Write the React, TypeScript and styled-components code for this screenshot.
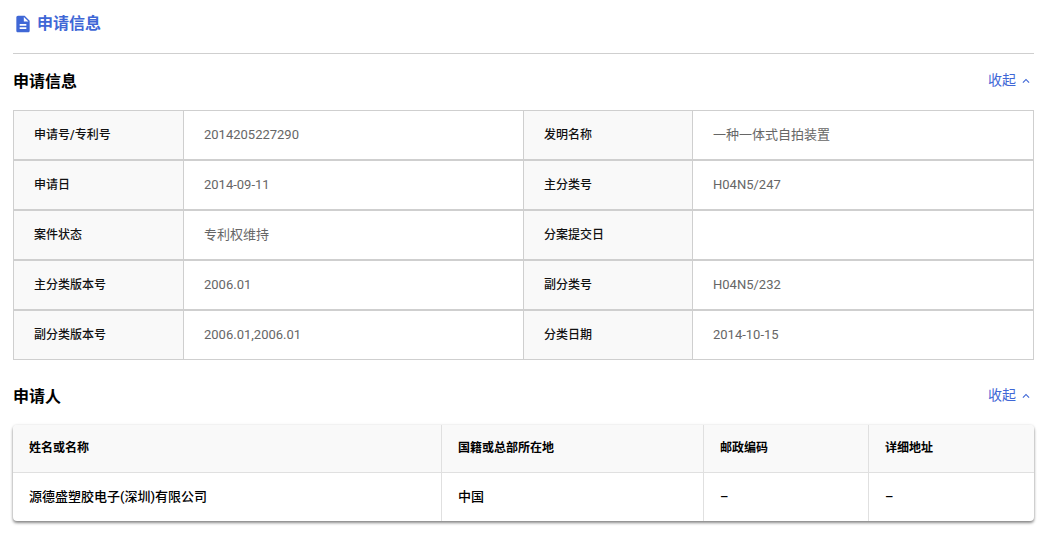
import React from 'react';
import styled, { createGlobalStyle } from 'styled-components';

const infoRows = [
  ['申请号/专利号', '2014205227290', '发明名称', '一种一体式自拍装置'],
  ['申请日', '2014-09-11', '主分类号', 'H04N5/247'],
  ['案件状态', '专利权维持', '分案提交日', ''],
  ['主分类版本号', '2006.01', '副分类号', 'H04N5/232'],
  ['副分类版本号', '2006.01,2006.01', '分类日期', '2014-10-15'],
];

const applicantHead = ['姓名或名称', '国籍或总部所在地', '邮政编码', '详细地址'];
const applicantRow = ['源德盛塑胶电子(深圳)有限公司', '中国', '–', '–'];

const Collapse = () => (
  <CollapseButton>
    收起
    <ChevronIcon width="14" height="14" viewBox="0 0 24 24" fill="#3f67d6">
      <path d="M7.41 15.41 12 10.83l4.59 4.58L18 14l-6-6-6 6z" />
    </ChevronIcon>
  </CollapseButton>
);

const App: React.FC = () => {
  return (
    <>
      <GlobalStyle />
      <Page>
        <TabHeader>
          <svg width="20" height="20" viewBox="0 0 24 24" fill="#3f67d6">
            <path d="M14 2H6c-1.1 0-1.99.9-1.99 2L4 20c0 1.1.89 2 1.99 2H18c1.1 0 2-.9 2-2V8l-6-6zm2 16H8v-2h8v2zm0-4H8v-2h8v2zm-3-5V3.5L18.5 9H13z" />
          </svg>
          <TabTitle>申请信息</TabTitle>
        </TabHeader>

        <SectionHeader>
          <SectionTitle>申请信息</SectionTitle>
          <Collapse />
        </SectionHeader>
        <InfoTable>
          {infoRows.map((row) => (
            <InfoRow key={row[0]}>
              <InfoLabel>{row[0]}</InfoLabel>
              <InfoValue>{row[1]}</InfoValue>
              <InfoLabel>{row[2]}</InfoLabel>
              <InfoValue>{row[3]}</InfoValue>
            </InfoRow>
          ))}
        </InfoTable>

        <ApplicantSection>
          <SectionHeader>
            <SectionTitle>申请人</SectionTitle>
            <Collapse />
          </SectionHeader>
        </ApplicantSection>
        <ApplicantCard>
          <ApplicantHead>
            {applicantHead.map((text) => (
              <ApplicantCell key={text}>{text}</ApplicantCell>
            ))}
          </ApplicantHead>
          <ApplicantBody>
            {applicantRow.map((text, i) => (
              <ApplicantCell key={i}>{text}</ApplicantCell>
            ))}
          </ApplicantBody>
        </ApplicantCard>
      </Page>
    </>
  );
};

const GlobalStyle = createGlobalStyle`
  html, body {
    margin: 0;
    background: #fff;
    font-family: Roboto, "Noto Sans CJK SC", sans-serif;
  }
`;

const Page = styled.div`
  padding: 0 11px 15px 13px;
`;

const TabHeader = styled.div`
  display: flex;
  align-items: center;
  gap: 4px;
  height: 54px;
  padding-bottom: 6px;
  box-sizing: border-box;
  border-bottom: 1px solid #cfcfcf;
`;

const TabTitle = styled.span`
  font-size: 16px;
  line-height: 20px;
  font-weight: 700;
  color: #3f67d6;
`;

const SectionHeader = styled.div`
  display: flex;
  align-items: center;
  justify-content: space-between;
  height: 56px;
  padding: 0 1px;
  box-sizing: border-box;
`;

const ApplicantSection = styled.div`
  margin-top: 9px;
`;

const SectionTitle = styled.span`
  font-size: 16px;
  line-height: 20px;
  font-weight: 700;
  color: #000;
  margin-left: -1px;
`;

const CollapseButton = styled.span`
  display: flex;
  align-items: center;
  gap: 3px;
  font-size: 14px;
  line-height: 20px;
  color: #3f67d6;
  margin-bottom: 4px;
`;

const ChevronIcon = styled.svg`
  margin-top: 1px;
`;

const InfoTable = styled.div`
  display: flex;
  flex-direction: column;
`;

const InfoRow = styled.div`
  display: grid;
  grid-template-columns: 170px 339px 170px 1fr;
  height: 50px;
  box-sizing: border-box;
  border: 1px solid #cfcfcf;
`;

const InfoLabel = styled.div`
  display: flex;
  align-items: center;
  padding: 0 0 1px 20px;
  background: #f9f9f9;
  border-right: 1px solid #cfcfcf;
  font-size: 12px;
  line-height: 20px;
  font-weight: 500;
  color: #111;

  &:nth-child(3) {
    border-left: 1px solid #cfcfcf;
  }
`;

const InfoValue = styled.div`
  display: flex;
  align-items: center;
  padding: 0 0 1px 20px;
  font-size: 13px;
  line-height: 20px;
  color: #666;
`;

const ApplicantCard = styled.div`
  border-radius: 4px;
  overflow: hidden;
  background: #fff;
  box-shadow: 0 2px 3px 0 rgba(0, 0, 0, 0.45), 0 0 3px 0 rgba(0, 0, 0, 0.1);
`;

const ApplicantHead = styled.div`
  display: grid;
  grid-template-columns: 429px 262px 165px 1fr;
  height: 48px;
  box-sizing: border-box;
  background: #f9f9f9;
  border-bottom: 1px solid #e0e0e0;
  font-size: 12px;
  font-weight: 700;

  & > div {
    padding-bottom: 2px;
  }
`;

const ApplicantBody = styled.div`
  display: grid;
  grid-template-columns: 429px 262px 165px 1fr;
  height: 48px;
  font-size: 13px;
  font-weight: 500;
`;

const ApplicantCell = styled.div`
  display: flex;
  align-items: center;
  padding-left: 16px;
  line-height: 20px;
  color: #000;
  border-right: 1px solid #e0e0e0;

  &:last-child {
    border-right: none;
  }
`;

export default App;
